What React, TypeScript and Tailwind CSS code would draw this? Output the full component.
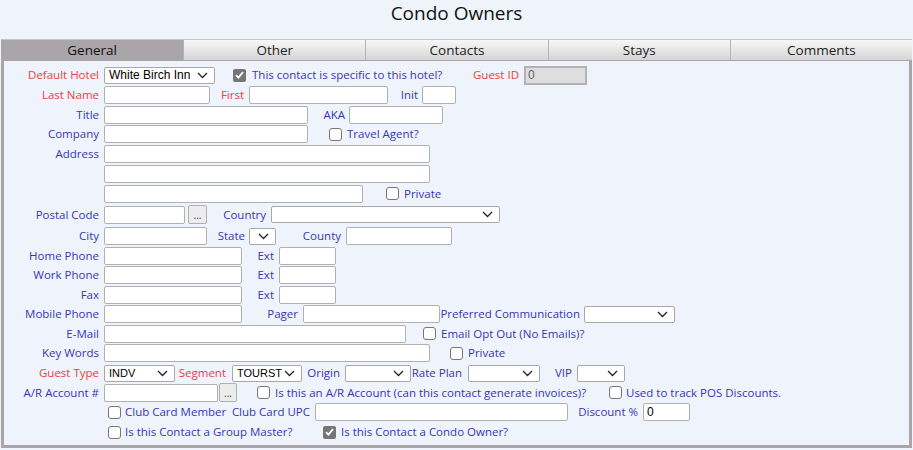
import React from 'react'

const font = { fontFamily: '"Open Sans", "Noto Sans", sans-serif' }

function Label({ children, red, className = '' }: { children?: React.ReactNode; red?: boolean; className?: string }) {
  return (
    <div className={`shrink-0 text-right whitespace-nowrap text-[11.5px] leading-none ${red ? 'text-[#ee3b3b]' : 'text-[#3636b4]'} ${className}`}>
      {children}
    </div>
  )
}

function Text({ children, className = '' }: { children: React.ReactNode; className?: string }) {
  return <div className={`shrink-0 whitespace-nowrap text-[11.5px] leading-none text-[#3636b4] ${className}`}>{children}</div>
}

function Field({ className = '', value = '' }: { className?: string; value?: string }) {
  return (
    <input
      readOnly
      value={value}
      className={`shrink-0 h-[18px] bg-white border border-[#b0b0b0] rounded-[2px] px-[3px] text-[12px] text-black outline-none font-['Liberation_Sans',Arial,sans-serif] ${className}`}
    />
  )
}

function Chevron() {
  return (
    <svg width="11" height="7" viewBox="0 0 11 7" className="shrink-0">
      <polyline points="1,1 5.5,5.5 10,1" fill="none" stroke="#222" strokeWidth="1.3" />
    </svg>
  )
}

function Select({ className = '', value = '', textSize = 'text-[12px]' }: { className?: string; value?: string; textSize?: string }) {
  return (
    <div
      className={`shrink-0 h-[17px] bg-white border border-[#a8a8a8] rounded-[2px] flex items-center justify-between pl-[4px] pr-[6px] text-black font-['Liberation_Sans',Arial,sans-serif] ${textSize} ${className}`}
    >
      <span className="leading-none">{value}</span>
      <Chevron />
    </div>
  )
}

function Check({ checked, className = '' }: { checked?: boolean; className?: string }) {
  if (checked) {
    return (
      <div className={`shrink-0 w-[13px] h-[13px] rounded-[2px] bg-[#767676] flex items-center justify-center ${className}`}>
        <svg width="9" height="8" viewBox="0 0 9 8">
          <polyline points="1,4.2 3.4,6.6 8,1.2" fill="none" stroke="white" strokeWidth="1.8" />
        </svg>
      </div>
    )
  }
  return <div className={`shrink-0 w-[13px] h-[13px] rounded-[3px] bg-white border border-[#767676] ${className}`} />
}

function Dots({ className = '' }: { className?: string }) {
  return (
    <div className={`shrink-0 h-[19px] bg-[#ececec] border border-[#b0b0b0] rounded-[2px] flex items-end justify-center pb-[3px] text-[10px] leading-none text-[#333] ${className}`}>
      ...
    </div>
  )
}

function Row({ h, children }: { h: string; children: React.ReactNode }) {
  return <div className={`flex items-center ${h}`}>{children}</div>
}

export default function App() {
  const tabs = ['General', 'Other', 'Contacts', 'Stays', 'Comments']
  return (
    <div className="w-[913px] h-[450px] bg-[#eff4fb] overflow-hidden" style={font}>
      <div className="h-[39px] flex justify-center pt-[1px] text-[19px] leading-[24px] font-medium text-[#111]">Condo Owners</div>
      <div className="ml-[1px] w-[911px]">
        <div className="grid grid-cols-5 h-[22px] border-t border-[#c4c4c4]">
          {tabs.map((t, i) => (
            <div
              key={t}
              className={
                i === 0
                  ? 'flex items-center justify-center bg-[#a9a5a9] text-[13.5px] text-[#111] font-medium pb-[1px]'
                  : 'flex items-center justify-center bg-gradient-to-b from-[#f8f8f8] to-[#d5d5d5] border-l border-[#b4b4b4] border-b border-b-[#a9a5a9] text-[13.5px] text-[#222]'
              }
            >
              {t}
            </div>
          ))}
        </div>
        <div className="h-[387px] border-[3px] border-t-0 border-[#a9a5a9] bg-[#eff4fc] pt-[4px]">
          <Row h="h-[20px]">
            <Label red className="w-[95px]">Default Hotel</Label>
            <Select className="ml-[5px] w-[111px]" value="White Birch Inn" />
            <div className="ml-[18px] w-[238px] flex items-center">
              <Check checked />
              <Text className="ml-[6px]">This contact is specific to this hotel?</Text>
            </div>
            <Label red className="w-[48px]">Guest ID</Label>
            <input
              readOnly
              value="0"
              className="ml-[5px] w-[63px] h-[19px] bg-[#dedede] border-2 border-[#b2b2b2] px-[2px] text-[12px] text-[#666] outline-none font-['Liberation_Sans',Arial,sans-serif]"
            />
          </Row>
          <Row h="h-[20px]">
            <Label red className="w-[95px]">Last Name</Label>
            <Field className="ml-[5px] w-[106px]" />
            <Label red className="w-[34px]">First</Label>
            <Field className="ml-[5px] w-[139px]" />
            <Label className="w-[30px]">Init</Label>
            <Field className="ml-[4px] w-[34px]" />
          </Row>
          <Row h="h-[19px]">
            <Label className="w-[95px]">Title</Label>
            <Field className="ml-[5px] w-[204px]" />
            <Label className="w-[37px]">AKA</Label>
            <Field className="ml-[4px] w-[94px]" />
          </Row>
          <Row h="h-[20px]">
            <Label className="w-[95px]">Company</Label>
            <Field className="ml-[5px] w-[204px]" />
            <Check className="ml-[21px]" />
            <Text className="ml-[5px]">Travel Agent?</Text>
          </Row>
          <Row h="h-[20px]">
            <Label className="w-[95px]">Address</Label>
            <Field className="ml-[5px] w-[326px]" />
          </Row>
          <Row h="h-[20px]">
            <Field className="ml-[100px] w-[326px]" />
          </Row>
          <Row h="h-[19px]">
            <Field className="ml-[100px] w-[259px]" />
            <Check className="ml-[23px]" />
            <Text className="ml-[5px]">Private</Text>
          </Row>
          <Row h="h-[23px]">
            <Label className="w-[95px]">Postal Code</Label>
            <Field className="ml-[5px] w-[81px]" />
            <Dots className="ml-[3px] w-[19px]" />
            <Label className="w-[59px]">Country</Label>
            <Select className="ml-[5px] w-[229px]" />
          </Row>
          <Row h="h-[20px]">
            <Label className="w-[95px]">City</Label>
            <Field className="ml-[5px] w-[103px]" />
            <Label className="w-[38px]">State</Label>
            <Select className="ml-[4px] w-[27px] !pr-[6px] !pl-[6px]" />
            <Label className="w-[65px]">County</Label>
            <Field className="ml-[5px] w-[106px]" />
          </Row>
          {['Home Phone', 'Work Phone', 'Fax'].map((l, i) => (
            <Row key={l} h={i === 1 ? 'h-[20px]' : 'h-[19px]'}>
              <Label className="w-[95px]">{l}</Label>
              <Field className="ml-[5px] w-[138px]" />
              <Label className="w-[32px]">Ext</Label>
              <Field className="ml-[5px] w-[57px]" />
            </Row>
          ))}
          <Row h="h-[20px]">
            <Label className="w-[95px]">Mobile Phone</Label>
            <Field className="ml-[5px] w-[138px]" />
            <Label className="w-[56px]">Pager</Label>
            <Field className="ml-[5px] w-[137px]" />
            <Label className="w-[140px]">Preferred Communication</Label>
            <Select className="ml-[4px] w-[91px]" />
          </Row>
          <Row h="h-[19px]">
            <Label className="w-[95px]">E-Mail</Label>
            <Field className="ml-[5px] w-[302px]" />
            <Check className="ml-[17px]" />
            <Text className="ml-[5px]">Email Opt Out (No Emails)?</Text>
          </Row>
          <Row h="h-[20px]">
            <Label className="w-[95px]">Key Words</Label>
            <Field className="ml-[5px] w-[326px]" />
            <Check className="ml-[20px]" />
            <Text className="ml-[5px]">Private</Text>
          </Row>
          <Row h="h-[20px]">
            <Label red className="w-[95px]">Guest Type</Label>
            <Select className="ml-[5px] w-[71px]" value="INDV" textSize="text-[11px]" />
            <Label red className="w-[51px]">Segment</Label>
            <Select className="ml-[6px] w-[70px]" value="TOURST" textSize="text-[11px]" />
            <Label className="w-[38px]">Origin</Label>
            <Select className="ml-[5px] w-[66px]" />
            <Label className="w-[51px]">Rate Plan</Label>
            <Select className="ml-[6px] w-[72px]" />
            <Label className="w-[32px]">VIP</Label>
            <Select className="ml-[5px] w-[48px]" />
          </Row>
          <Row h="h-[19px]">
            <Label className="w-[95px]">A/R Account #</Label>
            <Field className="ml-[5px] w-[114px]" />
            <Dots className="ml-[1px] w-[18px]" />
            <Check className="ml-[20px]" />
            <Text className="ml-[5px] w-[334px]">Is this an A/R Account (can this contact generate invoices)?</Text>
            <Check />
            <Text className="ml-[4px]">Used to track POS Discounts.</Text>
          </Row>
          <Row h="h-[20px]">
            <Check className="ml-[104px]" />
            <Text className="ml-[4px] w-[101px]">Club Card Member</Text>
            <Label className="w-[84px]">Club Card UPC</Label>
            <Field className="ml-[5px] w-[253px]" />
            <Label className="w-[70px]">Discount %</Label>
            <Field className="ml-[5px] w-[47px]" value="0" />
          </Row>
          <Row h="h-[20px]">
            <Check className="ml-[104px]" />
            <Text className="ml-[4px] w-[198px]">Is this Contact a Group Master?</Text>
            <Check checked />
            <Text className="ml-[5px]">Is this Contact a Condo Owner?</Text>
          </Row>
        </div>
      </div>
    </div>
  )
}
